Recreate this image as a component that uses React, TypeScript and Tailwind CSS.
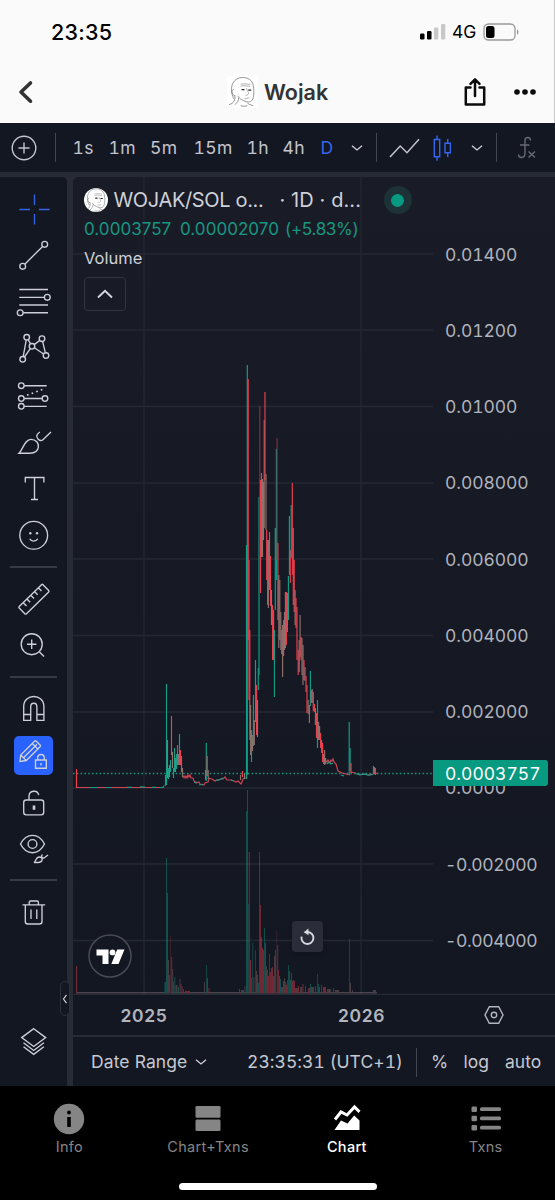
import React from 'react';

type Bar = [number, number, number, string]

const colors: Record<string, string> = {
    g: '#12a08a',
    r: '#f0404f',
    m: '#93716d',
    d: '#7a3440',
}

// x, high, low, color
const candles: Bar[] = [
    [76.5, 769, 788, 'r'],
    [165.5, 775, 786, 'g'], [166.5, 684, 785, 'g'], [167.5, 740, 778, 'm'], [168.5, 768, 779, 'g'], [169.5, 765, 777, 'm'],
    [170.5, 760, 772, 'g'], [171.5, 716, 755, 'r'], [172.5, 752, 768, 'm'], [173.5, 768, 778, 'g'], [174.5, 748, 772, 'g'],
    [175.5, 758, 772, 'm'], [176.5, 754, 769, 'g'], [177.5, 745, 765, 'r'], [178.5, 754, 765, 'm'], [179.5, 734, 765, 'g'],
    [180.5, 750, 765, 'r'], [181.5, 756, 772, 'r'], [182.5, 768, 777, 'm'],
    [205.5, 770, 780, 'r'], [206.3, 743, 781, 'g'], [207.2, 756, 776, 'r'], [208.2, 770, 779, 'm'],
    [240.5, 775, 780, 'm'], [242.5, 771, 777, 'r'], [244.5, 774, 779, 'm'],
    [246.5, 545, 779, 'g'], [247.3, 365, 775, 'g'], [248.2, 379, 640, 'r'], [249, 560, 700, 'r'], [249.8, 630, 740, 'r'],
    [250.6, 705, 755, 'm'], [251.5, 730, 762, 'g'], [252.5, 735, 751, 'm'], [253.4, 695, 746, 'g'], [254.3, 720, 745, 'm'],
    [255.5, 660, 722, 'g'], [256.6, 685, 735, 'r'], [257.5, 700, 737, 'm'], [258.3, 668, 690, 'g'], [259, 497, 675, 'g'],
    [259.8, 406, 592, 'd'], [260.6, 480, 593, 'r'], [261.5, 473, 557, 'r'], [262.5, 479, 557, 'm'], [263.5, 482, 540, 'm'],
    [264.2, 420, 528, 'm'], [265, 392, 480, 'r'], [266, 474, 530, 'm'], [266.7, 530, 580, 'r'], [267.6, 540, 605, 'r'],
    [268.4, 540, 608, 'm'], [269.5, 532, 590, 'r'], [270.5, 556, 606, 'r'], [271.5, 590, 625, 'm'], [272.6, 605, 660, 'r'],
    [273.6, 610, 660, 'r'], [274.4, 630, 697, 'g'], [275.3, 528, 610, 'g'], [276.4, 449, 580, 'g'], [277.1, 438, 560, 'd'],
    [277.9, 543, 620, 'r'], [278.8, 575, 648, 'm'], [279.8, 580, 640, 'm'], [280.8, 612, 650, 'm'], [281.7, 630, 654, 'r'],
    [282.6, 625, 677, 'm'], [283.6, 620, 656, 'r'], [284.5, 612, 650, 'm'], [285.4, 592, 648, 'm'], [286.4, 592, 645, 'r'],
    [287.4, 593, 632, 'm'], [288.4, 576, 620, 'g'], [289.4, 516, 575, 'g'], [290.3, 550, 583, 'r'], [291.2, 505, 558, 'g'],
    [292.3, 483, 575, 'r'], [293.3, 528, 605, 'r'], [294.2, 560, 612, 'r'], [295.1, 590, 625, 'm'], [296, 598, 628, 'r'],
    [297, 607, 660, 'r'], [298.2, 650, 675, 'r'], [299.2, 640, 672, 'm'], [300.1, 615, 657, 'm'], [301, 637, 660, 'r'],
    [302, 638, 675, 'm'], [303, 645, 685, 'm'], [304, 660, 680, 'r'], [305, 667, 681, 'm'], [306, 676, 692, 'r'],
    [307, 685, 713, 'r'], [308.2, 700, 714, 'm'], [309.4, 705, 723, 'm'], [310.4, 671, 706, 'g'], [311.3, 690, 703, 'm'],
    [312.3, 689, 703, 'm'], [313.3, 692, 711, 'r'], [314.4, 704, 712, 'r'], [315.4, 708, 725, 'm'], [316.5, 713, 738, 'r'],
    [317.5, 700, 748, 'g'], [318.6, 722, 740, 'm'], [319.6, 726, 740, 'm'], [320.6, 733, 748, 'r'], [321.6, 740, 753, 'm'],
    [322.6, 743, 762, 'r'], [323.6, 754, 764, 'r'], [324.6, 750, 765, 'm'], [325.6, 758, 764, 'm'],
    [349.2, 722, 775, 'g'], [350.1, 748, 771, 'g'], [351, 763, 773, 'r'],
    [373.4, 766, 773, 'g'], [374.4, 767, 773, 'm'], [375.4, 768, 775, 'r'],
]

// x, top, width, color
const volume: Bar[] = [
    [76, 966, 1.2, 'r'],
    [164.5, 982, 2, 'g'], [166, 858, 1, 'g'], [167, 893, 1, 'g'], [168, 960, 1, 'm'], [169, 975, 1, 'g'], [170.2, 936, .8, 'd'],
    [171.2, 957, 1, 'r'], [172.2, 969, 1, 'm'], [173.2, 982, 1, 'r'], [174.3, 977, 1, 'g'], [175.5, 985, 2, 'm'], [178, 987, 1, 'g'],
    [179.5, 979, 1, 'm'], [180.5, 984, 1, 'r'], [181.5, 986, 1, 'r'], [183, 989, 1, 'm'], [185, 991, 5, 'r'],
    [204, 982, 1, 'm'], [206, 965, .8, 'g'], [207, 978, 1, 'm'], [208.5, 988, 1, 'r'],
    [239, 989, 1, 'm'], [241, 990, 3, 'm'], [244.5, 986, 1, 'm'],
    [246, 811, 1, 'g'], [247, 790, 1, 'g'], [248.2, 904, .9, 'g'], [248.8, 852, 1.1, 'r'], [250, 960, 1.2, 'r'], [251.2, 978, 1, 'm'],
    [252.4, 943, .8, 'g'], [253.4, 977, 1, 'm'], [255, 950, .8, 'g'], [256, 971, 1, 'm'], [257, 975, 1, 'r'], [258, 983, 1, 'g'],
    [259, 852, .9, 'm'], [260, 905, 1, 'r'], [261, 937, 1, 'r'], [262, 948, 1, 'r'], [263, 950, 1, 'r'], [264, 928, .9, 'g'],
    [265, 943, 1, 'm'], [266, 966, 1, 'm'], [267, 970, 1, 'r'], [268, 976, 1, 'r'], [269, 954, .9, 'g'], [270, 972, 1, 'r'],
    [271, 968, 1, 'r'], [272, 967, 1, 'r'], [273, 976, 1, 'm'], [274, 956, 1, 'm'], [275, 950, 1, 'g'], [276.4, 931, .8, 'd'],
    [277.2, 945, 1, 'm'], [278, 970, 1, 'r'], [279, 976, 1, 'r'], [280, 979, 1, 'g'], [281, 987, 2, 'm'], [283, 981, 1, 'm'],
    [284, 978, 1, 'm'], [285, 982, 1, 'g'], [286, 985, 1, 'r'], [287, 980, 1, 'g'], [288, 965, .9, 'g'], [289, 971, 1, 'g'],
    [290, 980, 1, 'g'], [291, 973, 1, 'm'], [292, 981, 1, 'r'], [293, 980, 1, 'r'], [294, 981, 1, 'r'], [295, 988, 3, 'm'],
    [298, 986, 1, 'r'], [300, 987, 2, 'm'], [302.5, 984, 1, 'r'], [305, 986, 1, 'm'], [308, 988, 2, 'r'], [310, 984, 1, 'g'],
    [311, 987, 3, 'm'], [315, 986, 1, 'r'], [317, 974, .8, 'g'], [318, 984, 1, 'g'], [319, 987, 1, 'm'], [321, 985, 1, 'g'],
    [323, 987, 3, 'r'], [327, 989, 4, 'm'], [333, 988, 1, 'r'], [335, 990, 4, 'm'], [349, 939, .8, 'g'], [350, 983, 1, 'm'], [352, 990, 1, 'm'],
    [373, 990, 3, 'm'],
]

const flatRed = 'M76 787.5H164 M183 778l1-2 1 2 1-2 1 2 1-3 1 2 1-2 1 3 2 0 1 3 2 2 3-1 1 2 4 1 1-2 3-1 1-3 M208 778l4 1 3 2 2-1 2 0 2-1 2 0 2-2 2 3 4 0 3 1 2 1 2-1 3 3 1-2 1-3 2-1 2 0 M325 760l2 2 1-2 2 3 1-3 1 1 1-2 1 3 2 2 2 7 4 2 4 1 4 1 M351 772l4 1 5 2 4-1 4 1 5-1 4-1'
const flatGreen = 'M90 787.5h7 M105 787.5h6 M127 787.3h5 M140 786.8l5 .3 M152 787.3h4 M160 787.5h3l1-2 M194 782.5l3-.5 M199 785l4-.7 M215 780.5l4-.6 4-2 M231 780l3 1 M327 764l2-2 2 2 2-1 M341 775l3 1 M356 773.5l3 1.2 6-.5 4 1 4-.8'
const prices = ['0.01400', '0.01200', '0.01000', '0.008000', '0.006000', '0.004000', '0.002000', '0.0000', '-0.002000', '-0.004000']
const gridY = [254, 330, 406.5, 483, 559, 635.5, 712, 788, 864, 940.5]

function Icon({ children, className = '' }: { children: React.ReactNode, className?: string }) {
    return (
        <svg viewBox="0 0 40 40" fill="none" stroke="currentColor" strokeWidth="1.35" className={'w-[40px] h-[40px] ' + className}>
            {children}
        </svg>
    )
}

function Tool({ children, className = '' }: { children: React.ReactNode, className?: string }) {
    return (
        <button type="button" className="w-[67px] h-[46.7px] shrink-0 flex items-center pl-[14px]">
            <Icon className={className}>{children}</Icon>
        </button>
    )
}

function Separator() {
    return (
        <div className="h-[16.4px] shrink-0 flex items-center pl-[10px]">
            <div className="w-[47px] h-[2px] bg-[#363a44]" />
        </div>
    )
}

function Chevron({ className = '' }: { className?: string }) {
    return (
        <svg viewBox="0 0 12 8" fill="none" stroke="#cfd1d8" strokeWidth="1.3" className={'w-[12px] h-[8px] shrink-0 ' + className}>
            <path d="M1 1.7 6 6l5-4.3" />
        </svg>
    )
}

function Face() {
    return (
        <g fill="none" stroke="#777" strokeWidth=".8">
            <path d="M7 23C4 17 4 11 6 7 8 3 12 1 16 1c6 0 10 3 11 8 1 5 1 9 0 13-1 4-4 5-7 4-4-1-7-3-9-6" />
            <path d="M7 13c-3 1-2 6 1 7M8 19c1 5-1 9-6 10M12 22c0 3-1 5-4 7M21 27c1 2 3 2 6 3M14 30c2 1 5 1 7 0" />
            <path d="M14 8c4-1 6 0 10 0M14 10c3-1 6 0 10 0M20 12c1 4 4 5 1 7-1 1-2 0-2 0M18 23l5-1" strokeWidth=".6" />
            <path d="M15 13.5h3M22 14h3" stroke="#222" strokeWidth="1.4" />
        </g>
    )
}

function Header() {
    return (
        <header className="h-[123px] shrink-0 bg-[#fafafa] text-black border-r border-[#c9c9c9]">
            <div className="h-[62px] flex items-center pl-[51px] pr-[34px] pt-[2px]">
                <span className="text-[21.5px] font-medium tracking-[.25px]">23:35</span>
                <svg viewBox="0 0 28 18" className="w-[28px] h-[18px] ml-auto">
                    <rect x="1" y="10.5" width="4.5" height="6" rx="1.2" />
                    <rect x="8" y="8" width="4.5" height="8.5" rx="1.2" />
                    <rect x="15" y="4.5" width="4.3" height="12" rx="1.2" fill="#c8c8c8" />
                    <rect x="22" y="1" width="4.3" height="15.5" rx="1.2" fill="#c8c8c8" />
                </svg>
                <span className="text-[17.5px] ml-[5px] w-[31px] pt-[1px]">4G</span>
                <svg viewBox="0 0 37 18" fill="none" className="w-[37px] h-[18px]">
                    <rect x="1" y="1" width="31" height="16" rx="4.5" stroke="#999" strokeWidth="1.3" />
                    <rect x="3" y="3" width="8.5" height="12" rx="2.5" fill="#000" />
                    <path d="M34 6.5c2 .6 2 4.4 0 5z" fill="#999" />
                </svg>
            </div>
            <div className="h-[61px] flex items-center pl-[18px] pr-[17px] pb-[1px]">
                <svg viewBox="0 0 16 24" fill="none" stroke="#333" strokeWidth="3.6" strokeLinecap="round" strokeLinejoin="round" className="w-[16px] h-[24px]">
                    <path d="M12.5 3 3 12l9.5 9.2" />
                </svg>
                <svg viewBox="0 0 32 32" className="w-[31px] h-[32px] ml-[193px] bg-white"><Face /></svg>
                <h1 className="text-[21.5px] font-semibold text-[#333] ml-[6px] w-[199px]">Wojak</h1>
                <svg viewBox="0 0 24 30" fill="none" stroke="#0b0b0b" strokeWidth="2.5" strokeLinecap="round" strokeLinejoin="round" className="w-[24px] h-[30px]">
                    <path d="M7.5 10.5H2.8v17h18.4v-17h-4.7M12 19V3M7.5 6.8 12 2.3l4.500 4.500" />
                </svg>
                <svg viewBox="0 0 24 8" fill="#0b0b0b" className="w-[24px] h-[8px] ml-auto">
                    <circle cx="4" cy="4" r="2.8" /><circle cx="12" cy="4" r="2.8" /><circle cx="20" cy="4" r="2.8" />
                </svg>
            </div>
        </header>
    )
}

const intervals = [
    { label: '1s', width: 'w-[36px]' },
    { label: '1m', width: 'w-[41.5px]' },
    { label: '5m', width: 'w-[43.5px]' },
    { label: '15m', width: 'w-[53px]' },
    { label: '1h', width: 'w-[36px]' },
    { label: '4h', width: 'w-[38px]' },
    { label: 'D', width: 'w-[30px] text-[#3566f0]' },
]

function Toolbar() {
    return (
        <div className="h-[49px] shrink-0 flex items-center pl-[11px] bg-[#131722] text-[#c3c5cd]">
            <svg viewBox="0 0 26 26" fill="none" stroke="currentColor" strokeWidth="1.4" className="w-[26px] h-[26px]">
                <circle cx="13" cy="13" r="11.8" /><path d="M13 7.5v11M7.5 13h11" />
            </svg>
            <div className="w-px h-[29px] bg-[#434651] ml-[18px] mr-[16.5px]" />
            {intervals.map(i => (
                <button key={i.label} type="button" className={'text-left text-[17.5px] tracking-[.4px] tabular-nums pt-[2px] ' + i.width}>{i.label}</button>
            ))}
            <Chevron />
            <div className="w-px h-[29px] bg-[#434651] ml-[13px] mr-[12px]" />
            <svg viewBox="0 0 31 26" fill="none" stroke="currentColor" strokeWidth="1.5" className="w-[31px] h-[26px]">
                <path d="M1 22 11.2 11l6.8 6.7L30 4.3" />
            </svg>
            <svg viewBox="0 0 20 28" fill="none" stroke="#3566f0" strokeWidth="1.4" className="w-[20px] h-[28px] ml-[13px]">
                <path d="M1.3 5.5h5.4v17.3H1.3zM4 1.5v4M4 22.8v4M12 9.3h5.4v9.5H12zM14.7 5v4.3M14.7 18.8v4.2" />
            </svg>
            <Chevron className="ml-[18px]" />
            <div className="w-px h-[29px] bg-[#434651] ml-[13px] mr-[20px]" />
            <svg viewBox="0 0 20 24" fill="none" stroke="#686b75" strokeWidth="1.4" className="w-[20px] h-[24px]">
                <path d="M13.5 4.5c0-4-5.5-4-5.5 0v12.5c0 3.5-1.5 4.5-3.5 4.5S1.5 20 1.5 18.5M3 9h9.500M11.500 15.500l6.500 6M18 15.500l-6.500 6" />
            </svg>
        </div>
    )
}

function Sidebar() {
    return (
        <aside className="w-[67px] shrink-0 flex flex-col pt-[8.6px] bg-[#131722] text-[#cdd0d9] rounded-tr-[5px]">
            <Tool className="text-[#3563e6]"><path d="M20.5 5.5v10.5M20.5 25v10.5M5.3 20.5H16M25 20.5h10.7" /></Tool>
            <Tool>
                <circle cx="8.7" cy="30.3" r="2.9" /><circle cx="30.7" cy="8.3" r="2.9" /><path d="m10.8 28.2 17.8-17.8" />
            </Tool>
            <Tool>
                <path d="M5.3 7.5H34M5.3 15.3h25M5.3 23H34M9.2 30.7H34" />
                <circle cx="33.3" cy="15.3" r="2.9" /><circle cx="6.2" cy="30.7" r="2.9" />
            </Tool>
            <Tool>
                <circle cx="12.7" cy="8.3" r="2.8" /><circle cx="28" cy="9.7" r="2.8" /><circle cx="18" cy="17.3" r="2.8" />
                <circle cx="32" cy="26.5" r="2.8" /><circle cx="8.7" cy="30.3" r="2.8" />
                <path d="M12.2 11.1 9.2 27.5M14.1 10.7l2.5 4.2M20.2 15.6l5.6-4.2M28.6 12.4l2.8 11.4M20.4 18.8l9.2 6.2M16.3 19.6 10.4 28" />
            </Tool>
            <Tool>
                <circle cx="7.3" cy="9.7" r="2.8" /><circle cx="7.3" cy="22.5" r="2.8" /><circle cx="31" cy="22.5" r="2.8" /><circle cx="7.3" cy="30.3" r="2.8" />
                <path d="M10.1 9.7h22.6M10.1 22.5h18M10.1 30.3h22.6" />
                <path d="m13 19.2 18-6.7" strokeDasharray="1.7 3.2" strokeWidth="1.6" />
            </Tool>
            <Tool>
                <path d="M5 31.2c4-3.5 5.5-13.8 12-13.8 5 0 8 3.8 7.4 7.8-.6 4-4 6-8.4 6z" />
                <path d="m37 10-7.8 7.5c-1.5 1.4-3.5 1.2-5-.3-2.5-2.5-1.7-5 1.6-7.2" />
            </Tool>
            <Tool><path d="M11.3 13.5v-5h18.6v5M20.5 8.5v22M17 30.5h7" /></Tool>
            <Tool>
                <circle cx="19.7" cy="19.3" r="13.9" />
                <circle cx="16.3" cy="17.3" r="1.2" fill="currentColor" stroke="none" /><circle cx="23" cy="17.3" r="1.2" fill="currentColor" stroke="none" />
                <path d="M15.7 22.7c1.8 3.3 6.2 3.3 8 0" />
            </Tool>
            <Separator />
            <Tool>
                <path d="m29 5.7 5.7 5.8c.5.6.5 1 0 1.5L12.5 34.7c-.6.6-1.2.6-1.7 0l-5.6-5.6c-.5-.6-.5-1.2 0-1.7L27.5 5.7c.5-.5 1-.5 1.5 0zM9.5 24l3 3M13.2 20.3l3 3M17 16.5l3 3M20.7 12.8l3 3M24.5 9l3 3" />
            </Tool>
            <Tool><circle cx="17.7" cy="18.2" r="10.5" /><path d="M17.7 13.5v9.4M13 18.2h9.4M25.3 25.7l4.7 4.7" /></Tool>
            <Separator />
            <Tool>
                <path d="M9.7 31.3V17.5c0-13.3 20.2-13.3 20.2 0v13.8h-7V18c0-5-6.2-5-6.2 0v13.3zM9.7 25.5h7M22.9 25.5h7" />
            </Tool>
            <button type="button" className="w-[39px] h-[39px] my-[3.8px] ml-[14px] shrink-0 rounded-[5px] bg-[#2962ff]">
                <Icon>
                    <path d="m6 25.5.7-6.5L20.5 5.2c.6-.6 1.2-.6 1.8 0l3.8 3.8c.5.6.5 1.2 0 1.7L12.3 24.5zM6.7 19l5.6 5.5M9.5 21.8 23 8.2M18.2 7.5l5.6 5.6" />
                    <path d="M21.5 24h10.8v8.2H21.5zM23.7 24v-2.5c0-4 6.5-4 6.5 0V24M27 27v2.5" />
                </Icon>
            </button>
            <Tool>
                <rect x="9.7" y="18" width="20" height="14.8" rx="2.5" />
                <path d="M15 18v-3.5c0-6.5 8.5-7 9.7-1.5" /><path d="M20 23.5v4.3" strokeWidth="2.6" />
            </Tool>
            <Tool>
                <path d="M6.5 15c3-6 7-8.7 12-8.7s9 2.7 12 8.7c-3 6-7 8.7-12 8.7S9.5 21 6.5 15z" /><circle cx="18.5" cy="15" r="4.4" />
                <path d="M20 33.5c2-1 2-5.5 5-5.5 2.5 0 3.5 1.5 3 3.2-.5 1.7-2 2.3-4 2.3zM34 26l-4 3c-2 .8-3.5-2-1.5-3.5" />
            </Tool>
            <Separator />
            <Tool>
                <path d="M8.5 12.8h22.7M11.3 12.8V29.5c0 1.8 1 2.5 2.5 2.5h11.7c1.5 0 2.5-.7 2.5-2.5V12.8M15.2 12.5v-2.2c0-.8.5-1.3 1.3-1.3h6.6c.8 0 1.3.5 1.3 1.3v2.2M17 17.5v9.5M22.8 17.5v9.5" />
            </Tool>
            <div className="mt-auto mb-[21.5px]">
                <Tool>
                    <path d="m19.7 7.7 12 8.9-12 8.9-12-8.9zM9.5 21.8l10.2 7.7 10.2-7.7M9.5 25.7l10.2 7.7 10.2-7.7" />
                </Tool>
            </div>
        </aside>
    )
}

function Legend() {
    return (
        <div className="relative pl-[11px] pt-[9px] text-[#cfd1d8]">
            <div className="flex items-center h-[28px]">
                <svg viewBox="0 0 32 32" className="w-[24px] h-[24px] rounded-full bg-white"><Face /></svg>
                <span className="text-[20px] tracking-[-.35px] ml-[5.5px] w-[166px] whitespace-nowrap">WOJAK/SOL o...</span>
                <span className="text-[20px] tracking-[.1px] w-[104px] whitespace-nowrap">· 1D · d...</span>
                <div className="w-[28px] h-[28px] rounded-full bg-[#1c3237] flex items-center justify-center">
                    <div className="w-[13px] h-[13px] rounded-full bg-[#089981]" />
                </div>
            </div>
            <div className="flex items-center h-[28px] mt-[2px] text-[17px] text-[#179780] whitespace-nowrap">
                <span className="w-[96px] tracking-[.05px]">0.0003757</span>
                <span className="w-[105px] tracking-[.05px]">0.00002070</span>
                <span className="tracking-[-.3px]">(+5.83%)</span>
            </div>
            <div className="h-[28px] mt-[-.5px] text-[16.5px] leading-[28px]">Volume</div>
            <button type="button" className="mt-[5.5px] w-[42px] h-[34px] flex items-center justify-center rounded-[4px] border-[1.5px] border-[#31343f]">
                <svg viewBox="0 0 16 10" fill="none" stroke="#d6d8df" strokeWidth="1.9" className="w-[16px] h-[10px]"><path d="m1 8.5 7-6.7 7 6.7" /></svg>
            </button>
        </div>
    )
}

function Plot() {
    return (
        <svg viewBox="73 177 482 818" className="absolute inset-0 w-[482px] h-[818px]">
            <g stroke="#242833" strokeWidth="1.3">
                {gridY.map(y => <path key={y} d={`M73 ${y}H433`} />)}
                <path d="M144 177V994M361 177V994" />
            </g>
            <g opacity=".42">
                <rect x="76" y="992" width="301" height="1.5" fill="#93818a" />
                {volume.map((v, k) => <rect key={k} x={v[0]} y={v[1]} width={v[2]} height={993.5 - v[1]} fill={colors[v[3]]} />)}
            </g>
            <path d="M73 773.5H433" stroke="#18967f" strokeWidth="1.4" strokeDasharray="1.5 2.3" />
            <g fill="none" strokeWidth="1.15">
                <path d={flatRed} stroke="#cf4452" />
                <path d={flatGreen} stroke="#1d9784" />
                {candles.map((c, k) => <path key={k} d={`M${c[0]} ${c[1]}V${c[2]}`} stroke={colors[c[3]]} />)}
            </g>
            <path d="M73 994.3H555" stroke="#2d313c" />
        </svg>
    )
}

function Chart() {
    return (
        <div className="relative h-[818px] shrink-0 bg-linear-to-b from-[#191c27] to-[#131722] rounded-tl-[5px] flex justify-between overflow-hidden">
            <Plot />
            <Legend />
            <div className="absolute left-[360px] top-0 w-[122px] pt-[39.5px] text-[17.5px] tabular-nums text-[#b0b3bc]">
                {prices.map(p => (
                    <div key={p} className={'h-[76.25px] flex items-center pl-[12px] ' + (p.startsWith('-') ? 'tracking-[-.35px]' : 'tracking-[-.08px]')}>{p}</div>
                ))}
            </div>
            <div className="absolute left-[360px] top-[583px] w-[115px] h-[26px] pl-[12px] pt-[2px] flex items-center rounded-r-[3px] bg-[#089981] text-white text-[17.5px] tabular-nums">0.0003757</div>
            <svg viewBox="0 0 44 44" className="absolute left-[14.5px] top-[757px] w-[44px] h-[44px]">
                <circle cx="22" cy="22" r="21" fill="#131722" stroke="#484b56" strokeWidth="1.5" />
                <path d="M8.5 15.5h12v14.5h-6v-8.5h-6zM29.2 15.5h7.3l-6 14.5h-7.2z" fill="#fff" /><circle cx="24.5" cy="18.4" r="2.9" fill="#fff" />
            </svg>
            <button type="button" className="absolute left-[219px] top-[744px] w-[31px] h-[31px] rounded-[4px] bg-[#2a2d39] shadow-md">
                <svg viewBox="0 0 31 31" fill="none" stroke="#d6d8df" strokeWidth="1.9" className="w-[31px] h-[31px]">
                    <path d="M9.6 15.6a6 6 0 1 0 6.2-4.6h-2" /><path d="m16.5 7.6-4.8 3.6 4.8 3z" fill="#d6d8df" stroke="none" />
                </svg>
            </button>
        </div>
    )
}

function TabBar() {
    return (
        <nav className="h-[114px] shrink-0 bg-black text-[#858585] text-[14.5px] tracking-[.3px]">
            <div className="grid grid-cols-4 h-[97px] pt-[17px]">
                <a className="flex flex-col items-center gap-[1px]">
                    <svg viewBox="0 0 32 32" className="w-[32px] h-[32px]">
                        <circle cx="16" cy="16" r="15.2" fill="#858585" /><circle cx="16" cy="9.5" r="1.9" fill="#000" /><path d="M14.2 14h3.6v10h-3.6z" fill="#000" />
                    </svg>
                    Info
                </a>
                <a className="flex flex-col items-center gap-[1px]">
                    <svg viewBox="0 0 32 32" fill="#858585" className="w-[32px] h-[32px]">
                        <rect x="3.5" y="3" width="25" height="11.8" rx="1.3" /><rect x="3.5" y="16.5" width="25" height="11.5" rx="1.3" />
                    </svg>
                    Chart+Txns
                </a>
                <a className="flex flex-col items-center gap-[1px] text-white font-medium">
                    <svg viewBox="0 0 32 32" className="w-[32px] h-[32px]">
                        <path d="m4 16.5 6-7.5 6 3 7.5-8 5 4.8" fill="none" stroke="#fff" strokeWidth="3" />
                        <path d="m3.5 27 6.5-9.5 6.5 3 6.7-8 5.3 5v9.5z" fill="#fff" />
                    </svg>
                    Chart
                </a>
                <a className="flex flex-col items-center gap-[1px]">
                    <svg viewBox="0 0 32 32" fill="#858585" className="w-[32px] h-[32px]">
                        {[4, 13.2, 22.4].map(y => (
                            <g key={y}><rect x="1.5" y={y - .5} width="5.5" height="5.5" rx="1.2" /><rect x="10" y={y + .3} width="21" height="3.8" rx="1.5" /></g>
                        ))}
                    </svg>
                    Txns
                </a>
            </div>
            <div className="w-[198px] h-[6.5px] rounded-full bg-white mx-auto" />
        </nav>
    )
}

export default function App() {
    return (
        <div className="w-[555px] h-[1200px] overflow-hidden flex flex-col bg-[#272b36] font-['Inter','Liberation_Sans',sans-serif]">
            <Header />
            <Toolbar />
            <div className="flex h-[909px] mt-[5px] shrink-0">
                <Sidebar />
                <div className="relative w-[6px] shrink-0">
                    <div className="absolute left-[-7px] top-[804px] w-[10px] h-[35px] rounded-[5px] border border-[#2c303b] bg-[#131722] flex items-center justify-center">
                        <svg viewBox="0 0 6 10" fill="none" stroke="#cfd1d8" strokeWidth="1.2" className="w-[6px] h-[10px]"><path d="M4.5 .8 1.5 5l3 4.2" /></svg>
                    </div>
                </div>
                <div className="w-[482px] flex flex-col">
                    <Chart />
                    <div className="h-[40px] shrink-0 flex items-center bg-[#131722] text-[17.5px] font-semibold tracking-[.6px] text-[#b2b5be]">
                        <span className="w-[142px] text-center pt-[2px]">2025</span>
                        <span className="w-[293px] text-center pt-[2px]">2026</span>
                        <svg viewBox="0 0 20 20" fill="none" stroke="currentColor" strokeWidth="1.4" className="w-[20px] h-[20px] -ml-[24px]">
                            <path d="M5.3 1.7h9.4L19 10l-4.3 8.3H5.3L1 10z" /><circle cx="10" cy="10" r="2.7" />
                        </svg>
                    </div>
                    <div className="flex-1 mt-[2px] flex items-center bg-[#131722] pl-[18px] pt-[1px] text-[17.5px] text-[#c6c8d0] whitespace-nowrap">
                        <span className="w-[104px] tracking-[.1px]">Date Range</span>
                        <Chevron />
                        <span className="ml-[40px] w-[169px] tabular-nums tracking-[.05px]">23:35:31 (UTC+1)</span>
                        <div className="w-px h-[29px] bg-[#434651] mr-[14px]" />
                        <span className="w-[32.5px]">%</span>
                        <span className="w-[41.5px]">log</span>
                        <span>auto</span>
                    </div>
                </div>
            </div>
            <TabBar />
        </div>
    )
}
